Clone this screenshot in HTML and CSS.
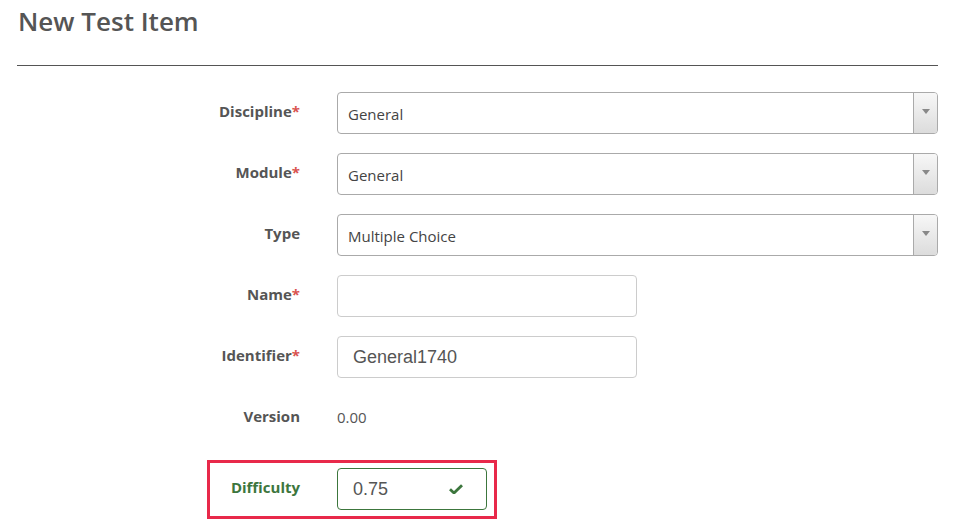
FILE: index.html
```html
<!DOCTYPE html>
<html lang="en">
<head>
  <meta charset="UTF-8" />
  <title>New Test Item</title>
  <link rel="stylesheet" href="styles.css">
</head>
<body>
  <div class="page">
    <h1 class="title">New Test Item</h1>
    <hr class="divider">

    <form class="item-form">
      <div class="row">
        <label class="label">Discipline<span class="req">*</span></label>
        <div class="select">
          <span class="select-value">General</span>
          <span class="select-btn"><span class="caret"></span></span>
        </div>
      </div>
      <div class="row">
        <label class="label">Module<span class="req">*</span></label>
        <div class="select">
          <span class="select-value">General</span>
          <span class="select-btn"><span class="caret"></span></span>
        </div>
      </div>
      <div class="row">
        <label class="label">Type</label>
        <div class="select">
          <span class="select-value">Multiple Choice</span>
          <span class="select-btn"><span class="caret"></span></span>
        </div>
      </div>
      <div class="row">
        <label class="label">Name<span class="req">*</span></label>
        <input class="input" type="text" value="">
      </div>
      <div class="row">
        <label class="label">Identifier<span class="req">*</span></label>
        <input class="input" type="text" value="General1740">
      </div>
      <div class="row">
        <label class="label">Version</label>
        <span class="static">0.00</span>
      </div>
      <div class="row row-difficulty">
        <span class="mark"></span>
        <label class="label ok">Difficulty</label>
        <div class="input-wrap">
          <input class="input input-ok" type="text" value="0.75">
          <svg class="check" viewBox="0 0 14 10" width="14" height="10">
            <path d="M1 5.2 L5 9 L13 1.2" fill="none" stroke="#3c763d" stroke-width="2.8"/>
          </svg>
        </div>
      </div>
    </form>
  </div>
</body>
</html>
```

FILE: styles.css
```css
body {
  margin: 0;
  background: #fff;
  font-family: 'Open Sans', sans-serif;
  color: #555;
}

.page {
  padding: 0 17px;
}

.title {
  margin: 6px 0 0 1px;
  font-size: 26px;
  line-height: 31px;
  font-weight: 600;
  color: #555;
}

.divider {
  margin: 28px 0 0;
  border: none;
  border-top: 1px solid #555;
}

.item-form {
  padding-top: 26px;
}

.row {
  display: grid;
  grid-template-columns: 283px 601px;
  column-gap: 37px;
  align-items: center;
  height: 42px;
  margin-bottom: 19px;
}

.row:nth-child(4) {
  margin-top: 2px;
}

.label {
  text-align: right;
  font-weight: 700;
  font-size: 15px;
  color: #555;
  padding-bottom: 4px;
}

.req {
  color: #d9534f;
}

.select {
  display: flex;
  height: 42px;
  box-sizing: border-box;
  border: 1px solid #aaa;
  border-radius: 4px;
  overflow: hidden;
  background: #fff;
}

.select-value {
  flex: 1;
  padding: 1px 0 0 10px;
  line-height: 40px;
  font-size: 15px;
  color: #444;
}

.select-btn {
  width: 23px;
  border-left: 1px solid #aaa;
  background: linear-gradient(#f7f7f7, #dcdcdc);
  display: flex;
  align-items: center;
  justify-content: center;
}

.caret {
  width: 0;
  height: 0;
  border-left: 4px solid transparent;
  border-right: 4px solid transparent;
  border-top: 5px solid #888;
  margin-bottom: 3px;
}

.input {
  width: 300px;
  height: 42px;
  box-sizing: border-box;
  border: 1px solid #ccc;
  border-radius: 4px;
  padding: 0 15px;
  font-family: 'Liberation Sans', Arial, sans-serif;
  font-size: 18px;
  color: #555;
  outline: none;
}

.static {
  font-size: 15px;
  color: #555;
  padding-bottom: 3px;
}

.row-difficulty {
  position: relative;
  margin-top: 29px;
}

.mark {
  position: absolute;
  left: 190px;
  top: -8px;
  width: 290px;
  height: 59px;
  box-sizing: border-box;
  border: 3px solid #e8294a;
}

.label.ok {
  color: #3c763d;
}

.input-wrap {
  position: relative;
  width: 150px;
}

.input-ok {
  width: 150px;
  border-color: #3c763d;
}

.check {
  position: absolute;
  left: 112px;
  top: 16px;
}
```
